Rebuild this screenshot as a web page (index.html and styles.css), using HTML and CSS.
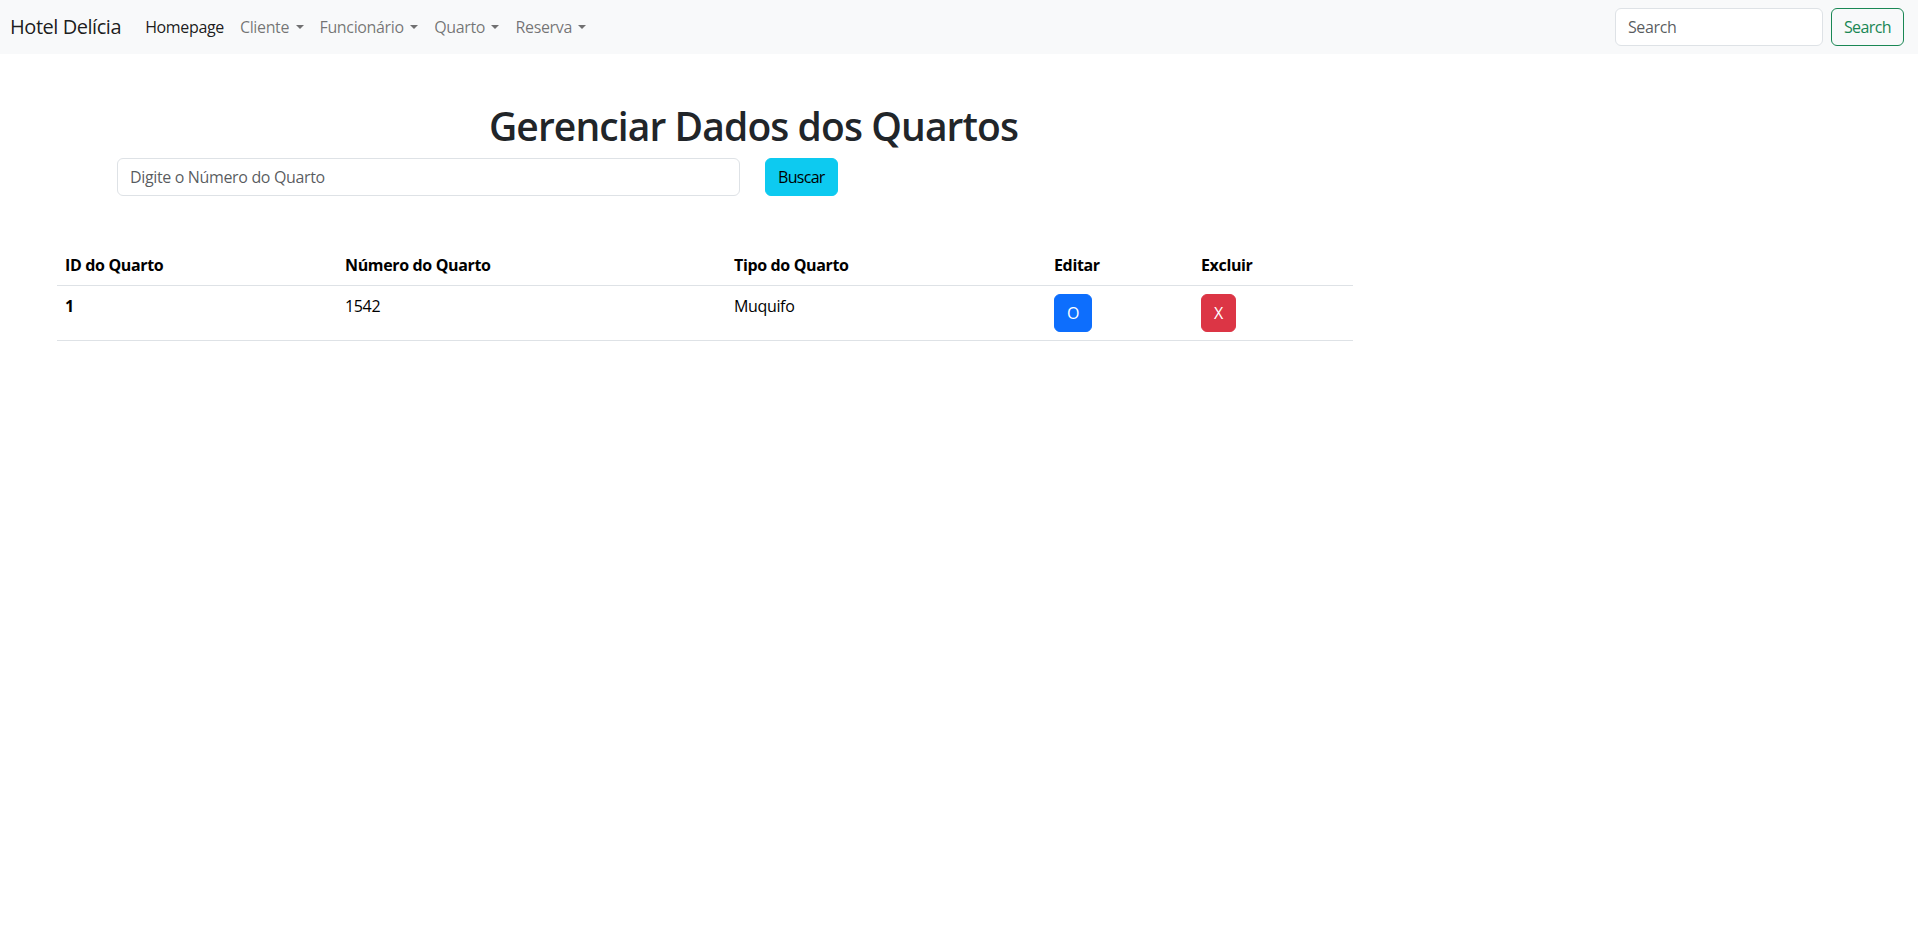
FILE: index.html
```html
<!DOCTYPE html>
<html lang="pt-BR">
<head>
<meta charset="utf-8">
<title>Gerenciar Quartos</title>
<link rel="stylesheet" href="styles.css">
</head>
<body>
<nav class="navbar">
  <a class="brand" href="#">Hotel Delícia</a>
  <ul class="nav-list">
    <li><a class="nav-link active" href="#">Homepage</a></li>
    <li><a class="nav-link toggle" href="#">Cliente</a></li>
    <li><a class="nav-link toggle" href="#">Funcionário</a></li>
    <li><a class="nav-link toggle" href="#">Quarto</a></li>
    <li><a class="nav-link toggle" href="#">Reserva</a></li>
  </ul>
  <form class="nav-search">
    <input class="field nav-field" type="search" placeholder="Search">
    <button class="btn btn-outline-success" type="button">Search</button>
  </form>
</nav>
<main class="page">
  <h1 class="title">Gerenciar Dados dos Quartos</h1>
  <form class="finder">
    <input class="field finder-field" type="text" placeholder="Digite o Número do Quarto">
    <button class="btn btn-info" type="button">Buscar</button>
  </form>
  <table class="table">
    <colgroup>
      <col class="c1"><col class="c2"><col class="c3"><col class="c4"><col class="c5">
    </colgroup>
    <thead>
      <tr>
        <th>ID do Quarto</th>
        <th>Número do Quarto</th>
        <th>Tipo do Quarto</th>
        <th>Editar</th>
        <th>Excluir</th>
      </tr>
    </thead>
    <tbody>
      <tr>
        <th>1</th>
        <td>1542</td>
        <td>Muquifo</td>
        <td><a class="btn btn-primary" href="#">O</a></td>
        <td><a class="btn btn-danger" href="#">X</a></td>
      </tr>
    </tbody>
  </table>
</main>
</body>
</html>
```
FILE: styles.css
```css
* { box-sizing: border-box; }

body {
  margin: 0;
  font-family: "Open Sans", "Noto Sans", sans-serif;
  font-size: 16px;
  line-height: 1.5;
  letter-spacing: -0.35px;
  color: #212529;
  background: #fff;
}

a { text-decoration: none; }

.navbar {
  display: flex;
  align-items: center;
  background: #f8f9fa;
  padding: 8px 14px 8px 10px;
}

.brand {
  font-size: 20px;
  line-height: 30px;
  padding: 4px 0;
  margin-right: 16px;
  letter-spacing: -0.45px;
  color: rgba(0, 0, 0, .9);
}

.nav-list {
  display: flex;
  list-style: none;
  margin: 0;
  padding: 0;
  flex: 1;
}

.nav-link {
  display: block;
  padding: 7px 8px;
  color: rgba(0, 0, 0, .55);
}

.nav-link.active { color: rgba(0, 0, 0, .9); }

.toggle::after {
  content: "";
  display: inline-block;
  margin-left: .4em;
  vertical-align: .255em;
  border-top: .3em solid;
  border-right: .3em solid transparent;
  border-left: .3em solid transparent;
}

.nav-search {
  display: flex;
  align-items: center;
  gap: 8px;
  margin: 0;
}

.field {
  display: block;
  height: 38px;
  padding: 6px 12px;
  font: inherit;
  letter-spacing: inherit;
  color: #212529;
  background: #fff;
  border: 1px solid #dee2e6;
  border-radius: 6px;
  outline: none;
}

.field::placeholder { color: rgba(33, 37, 41, .75); }

.nav-field { width: 208px; }

.btn {
  display: inline-block;
  padding: 6px 12px;
  font: inherit;
  letter-spacing: inherit;
  line-height: 24px;
  border: 1px solid transparent;
  border-radius: 6px;
  background: transparent;
  cursor: pointer;
  text-align: center;
}

.btn-outline-success {
  color: #198754;
  border-color: #198754;
  letter-spacing: -0.6px;
}

.btn-info {
  background: #0dcaf0;
  border-color: #0dcaf0;
  color: #000;
  letter-spacing: -0.7px;
}

.btn-primary {
  background: #0d6efd;
  border-color: #0d6efd;
  color: #fff;
}

.btn-danger {
  background: #dc3545;
  border-color: #dc3545;
  color: #fff;
}

.page {
  padding: 0 0 0 57px;
}

.title {
  width: 1393px;
  margin: 48px 0 8px;
  font-size: 39px;
  line-height: 48px;
  font-weight: 600;
  letter-spacing: -0.9px;
  text-align: center;
  color: #212529;
}

.finder {
  display: flex;
  align-items: center;
  gap: 25px;
  margin: 0 0 0 60px;
}

.finder-field { width: 623px; }

.table {
  margin-top: 49px;
  width: 1296px;
  border-collapse: collapse;
  table-layout: fixed;
  color: #000;
}

.c1 { width: 280px; }
.c2 { width: 389px; }
.c3 { width: 320px; }
.c4 { width: 147px; }
.c5 { width: 160px; }

.table th,
.table td {
  padding: 8px;
  text-align: left;
  vertical-align: top;
  border-bottom: 1px solid #dee2e6;
  font-weight: 400;
}

.table th { font-weight: 700; }
```
